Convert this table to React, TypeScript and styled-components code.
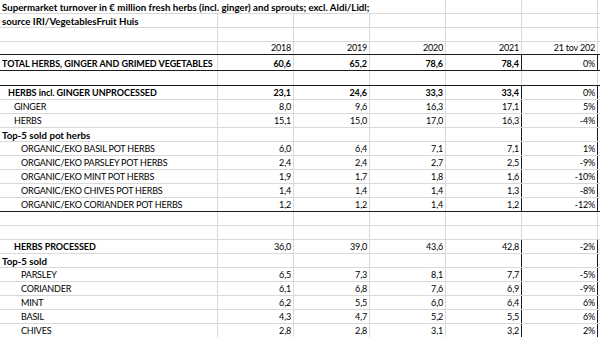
import React from 'react'
import styled, { createGlobalStyle } from 'styled-components'

const GlobalStyle = createGlobalStyle`
    html, body {
        margin: 0;
        padding: 0;
        background: #ffffff;
    }
    body {
        font-family: Lato, "Open Sans", sans-serif;
        font-size: 9px;
        color: #000;
        overflow: hidden;
    }
`

const GRID = '#d9d9d9'
const DARK = '#1c1c1c'

const Sheet = styled.div`
    display: flex;
    flex-direction: column;
    width: 600px;
`
const Row = styled.div<{ $h: number; $line?: boolean }>`
    display: grid;
    grid-template-columns: 218px repeat(5, 76px) 1fr;
    height: ${p => p.$h}px;
    box-sizing: border-box;
    border-bottom: 1px solid ${p => (p.$line ? DARK : GRID)};
`
const Cell = styled.div<{ $right?: boolean; $bold?: boolean; $indent?: number; $dark?: boolean; $span?: number; $mixed?: boolean }>`
    display: flex;
    align-items: flex-end;
    justify-content: ${p => (p.$right ? 'flex-end' : 'flex-start')};
    grid-column: span ${p => p.$span || 1};
    padding: 0 2px 0 ${p => p.$indent ?? 2}px;
    box-sizing: border-box;
    border-right: 1px solid ${p => (p.$dark ? DARK : GRID)};
    font-weight: ${p => (p.$bold ? 700 : 400)};
    font-size: ${p => (p.$mixed ? '9.7px' : '9px')};
    letter-spacing: ${p => (p.$mixed ? '0' : p.$bold ? '-0.05px' : '-0.2px')};
    white-space: nowrap;
    overflow: hidden;
    line-height: 12px;
`
const Spare = styled.div``

type Line = {
    label?: string
    indent?: number
    bold?: boolean
    mixed?: boolean
    values?: string[]
    valBold?: boolean
    pct?: string
    h?: number
    line?: boolean
    boxed?: boolean
}

const rows: Line[] = [
    { label: 'source IRI/VegetablesFruit Huis', bold: true, mixed: true },
    {},
    { values: ['2018', '2019', '2020', '2021'], pct: '21 tov 202', h: 13, line: true },
    { label: 'TOTAL HERBS, GINGER AND GRIMED VEGETABLES', bold: true, values: ['60,6', '65,2', '78,6', '78,4'], valBold: true, pct: '0%', h: 16, line: true, boxed: true },
    { h: 15, line: true },
    { label: 'HERBS incl. GINGER UNPROCESSED', indent: 8, bold: true, values: ['23,1', '24,6', '33,3', '33,4'], valBold: true, pct: '0%', boxed: true },
    { label: 'GINGER', indent: 14, values: ['8,0', '9,6', '16,3', '17,1'], pct: '5%', boxed: true },
    { label: 'HERBS', indent: 14, values: ['15,1', '15,0', '17,0', '16,3'], pct: '-4%', boxed: true },
    { label: 'Top-5 sold pot herbs', bold: true, mixed: true, boxed: true },
    { label: 'ORGANIC/EKO BASIL POT HERBS', indent: 21, values: ['6,0', '6,4', '7,1', '7,1'], pct: '1%', boxed: true },
    { label: 'ORGANIC/EKO PARSLEY POT HERBS', indent: 21, values: ['2,4', '2,4', '2,7', '2,5'], pct: '-9%', boxed: true },
    { label: 'ORGANIC/EKO MINT POT HERBS', indent: 21, values: ['1,9', '1,7', '1,8', '1,6'], pct: '-10%', boxed: true },
    { label: 'ORGANIC/EKO CHIVES POT HERBS', indent: 21, values: ['1,4', '1,4', '1,4', '1,3'], pct: '-8%', boxed: true },
    { label: 'ORGANIC/EKO CORIANDER POT HERBS', indent: 21, values: ['1,2', '1,2', '1,4', '1,2'], pct: '-12%', boxed: true, line: true },
    {},
    {},
    { label: 'HERBS PROCESSED', indent: 14, bold: true, values: ['36,0', '39,0', '43,6', '42,8'], pct: '-2%', boxed: true },
    { label: 'Top-5 sold', bold: true, mixed: true, boxed: true },
    { label: 'PARSLEY', indent: 21, values: ['6,5', '7,3', '8,1', '7,7'], pct: '-5%', boxed: true },
    { label: 'CORIANDER', indent: 21, values: ['6,1', '6,8', '7,6', '6,9'], pct: '-9%', boxed: true },
    { label: 'MINT', indent: 21, values: ['6,2', '5,5', '6,0', '6,4'], pct: '6%', boxed: true },
    { label: 'BASIL', indent: 21, values: ['4,3', '4,7', '5,2', '5,5'], pct: '6%', boxed: true },
    { label: 'CHIVES', indent: 21, values: ['2,8', '2,8', '3,1', '3,2'], pct: '2%', boxed: true },
]

const App = () => {
    return (
        <>
            <GlobalStyle />
            <Sheet>
                <Row $h={14}>
                    <Cell $span={4} $bold $mixed>{'Supermarket turnover in € million fresh herbs (incl. ginger) and sprouts; excl. Aldi/Lidl;'}</Cell>
                    <Cell />
                    <Cell />
                    <Spare />
                </Row>
                {
                    rows.map((r, i) => {
                        const values = r.values || ['', '', '', '']
                        return (
                            <Row key={i} $h={r.h || 14} $line={r.line}>
                                <Cell $bold={r.bold} $indent={r.indent} $mixed={r.mixed}>{r.label}</Cell>
                                {
                                    values.map((v, j) => (
                                        <Cell key={j} $right $bold={r.valBold} $dark={r.boxed && j === 3}>{v}</Cell>
                                    ))
                                }
                                <Cell $right $dark={r.boxed}>{r.pct}</Cell>
                                <Spare />
                            </Row>
                        )
                    })
                }
            </Sheet>
        </>
    )
}

export default App
